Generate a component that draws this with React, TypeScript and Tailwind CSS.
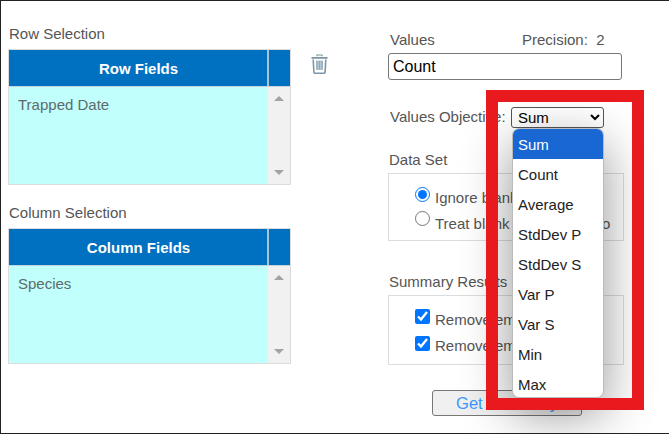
const OPTIONS = ['Sum', 'Count', 'Average', 'StdDev P', 'StdDev S', 'Var P', 'Var S', 'Min', 'Max'];

function TrashIcon() {
  return (
    <svg width="17" height="20" viewBox="0 0 17 20" fill="none">
      <path d="M6 2.2V1h5v1.2" stroke="#7b98a8" strokeWidth="1.2" />
      <path d="M0.5 3h16v1.8H0.5z" fill="#7b98a8" />
      <path d="M2.2 5.5l.7 12.6c.1.8.6 1.2 1.3 1.2h8.6c.7 0 1.2-.4 1.3-1.2l.7-12.6" stroke="#7b98a8" strokeWidth="1.6" />
      <path d="M5 6.5h7v9.5H5z" fill="#b5c6d0" />
      <path d="M6 7v8.5M8.5 7v8.5M11 7v8.5" stroke="#8fa8b6" strokeWidth="1" />
    </svg>
  );
}

function FieldTable({ title, item }: { title: string; item: string }) {
  return (
    <div className="w-[283px] h-[136px] flex flex-col border border-[#dcdcdc]">
      <div className="flex h-[37px] bg-[#0070c0] border-b border-[#c4d3de]">
        <div className="flex-1 flex items-center justify-center pt-[2px] pl-[1px] text-white font-bold text-[15px] border-r-2 border-[#a9c2d8]">
          {title}
        </div>
        <div className="w-[21px]" />
      </div>
      <div className="flex flex-1">
        <div className="flex-1 bg-[#c0fffb] px-[9px] pt-[8px] text-[15px] leading-[20px] text-[#5f6b6b]">{item}</div>
        <div className="w-[22px] bg-[#f1f1f1] flex flex-col items-center justify-between py-[9px]">
          <div className="w-0 h-0 border-x-[5px] border-x-transparent border-b-[5px] border-b-[#a3a3a3]" />
          <div className="w-0 h-0 border-x-[5px] border-x-transparent border-t-[5px] border-t-[#a3a3a3]" />
        </div>
      </div>
    </div>
  );
}

export default function App() {
  return (
    <div className="relative w-[669px] h-[434px] overflow-hidden bg-white border border-[#222] border-r-0 font-['Liberation_Sans',Arial,sans-serif] text-[15px] text-[#555]">
      <div className="flex pl-[7px] pt-[23px]">
        {/* Left column */}
        <div className="w-[283px]">
          <div className="h-[20px] leading-[20px] mb-[5px] pl-[1px]">Row Selection</div>
          <FieldTable title="Row Fields" item="Trapped Date" />
          <div className="h-[20px] leading-[20px] mt-[18px] mb-[5px] pl-[1px]">Column Selection</div>
          <FieldTable title="Column Fields" item="Species" />
        </div>

        <div className="w-[97px] pl-[20px] pt-[30px]">
          <TrashIcon />
        </div>

        {/* Right column */}
        <div className="w-[236px] pt-[6px]">
          <div className="flex h-[20px] leading-[20px] pl-[2px]">
            <span className="w-[132px]">Values</span>
            <span>Precision:&nbsp; 2</span>
          </div>
          <input
            readOnly
            value="Count"
            className="block mt-[3px] w-[234px] h-[27px] px-[4px] border border-[#777] rounded-[3px] text-[16px] text-black outline-none"
          />
          <div className="flex items-center h-[21px] mt-[27px] pl-[2px]">
            <span className="w-[121px]">Values Objective:</span>
            <select className="w-[93px] h-[21px] pl-[2px] border border-[#555] rounded-[3px] text-[15px] text-black bg-white">
              <option>Sum</option>
            </select>
          </div>
          <div className="h-[20px] leading-[20px] mt-[22px] pl-[1px]">Data Set</div>
          <div className="mt-[3px] h-[68px] border border-[#dcdcdc] pl-[26px] pt-[7px] flex flex-col">
            <label className="flex items-start gap-[5px] h-[26px]">
              <input type="radio" name="blank" defaultChecked className="w-[15px] h-[15px] mt-[6px] mb-0 mx-0 accent-[#0075ff]" />
              <span className="mt-[6px]">Ignore blank values</span>
            </label>
            <label className="flex items-start gap-[5px] h-[26px]">
              <input type="radio" name="blank" className="w-[15px] h-[15px] mt-[4px] mb-0 mx-0" />
              <span className="mt-[6px]">Treat blank values as zero</span>
            </label>
          </div>
          <div className="h-[20px] leading-[20px] mt-[31px] pl-[1px]">Summary Results</div>
          <div className="mt-[3px] h-[70px] border border-[#dcdcdc] pl-[26px] pt-[8px] flex flex-col">
            <label className="flex items-start gap-[5px] h-[26px]">
              <input type="checkbox" defaultChecked className="w-[15px] h-[15px] mt-[5px] mb-0 mx-0 accent-[#0075ff]" />
              <span className="mt-[5px]">Remove empty rows</span>
            </label>
            <label className="flex items-start gap-[5px] h-[26px]">
              <input type="checkbox" defaultChecked className="w-[15px] h-[15px] mt-[6px] mb-0 mx-0 accent-[#0075ff]" />
              <span className="mt-[5px]">Remove empty columns</span>
            </label>
          </div>
          <div className="mt-[25px] pl-[44px]">
            <button className="w-[150px] h-[26px] pb-[2px] border border-[#777] rounded-[3px] bg-[#f0f0f0] text-[#3b99fc] text-[16.5px]">
              Get Summary
            </button>
          </div>
        </div>
      </div>

      {/* Open select list */}
      <div className="absolute left-[511px] top-[127px] w-[92px] h-[270px] bg-white border border-[#bbb] rounded-[7px] overflow-hidden shadow-[0_16px_50px_rgba(0,0,0,0.42)] text-[15px] text-[#222] z-10">
        {OPTIONS.map((opt, i) => (
          <div
            key={opt}
            className={
              i === 0
                ? 'h-[30px] leading-[32px] px-[5px] bg-[#1967d2] text-white'
                : 'h-[30px] leading-[32px] px-[5px]'
            }
          >
            {opt}
          </div>
        ))}
      </div>

      {/* Red highlight annotation */}
      <div className="absolute left-[485px] top-[89px] w-[158px] h-[320px] border-[12px] border-[#e91a1d] z-20 pointer-events-none" />
    </div>
  );
}
